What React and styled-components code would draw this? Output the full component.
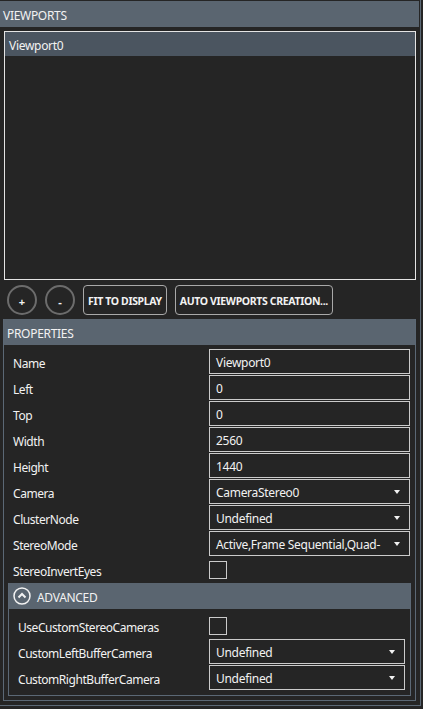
import React from 'react'
import styled, { createGlobalStyle } from 'styled-components'

const GlobalStyle = createGlobalStyle`
  body {
    margin: 0;
    background: #252525;
    font-family: 'Noto Sans', 'Open Sans', sans-serif;
    color: #f2f2f2;
  }
`

const Frame = styled.div`
  width: 421px;
  height: 706px;
  box-sizing: border-box;
  padding-top: 1px;
  border-right: 1px solid #5b6875;
  border-bottom: 1px solid #5b6875;
  display: flex;
  flex-direction: column;
`

const SectionHeader = styled.div`
  height: 26px;
  box-sizing: border-box;
  padding-top: 2px;
  flex: none;
  background: #5a6570;
  font-size: 12px;
  letter-spacing: -0.3px;
  padding-left: ${(props) => props.indent || 3}px;
  margin-right: ${(props) => props.gapRight || 0}px;
  display: flex;
  align-items: center;
  gap: 6px;
`

const ViewportList = styled.div`
  height: 249px;
  margin: 4px 4px 0 4px;
  box-sizing: border-box;
  border: 1px solid #e4e4e4;
  flex: none;
`

const ListItem = styled.div`
  height: 24px;
  box-sizing: border-box;
  padding: 2px 0 0 4px;
  display: flex;
  align-items: center;
  font-size: 12px;
  letter-spacing: -0.3px;
  background: ${(props) => (props.selected ? '#4b5560' : 'transparent')};
`

const ButtonRow = styled.div`
  height: 30px;
  margin-top: 5px;
  padding-left: 7px;
  display: flex;
  align-items: center;
  gap: 8px;
  flex: none;
`

const CircleButton = styled.div`
  width: 30px;
  height: 30px;
  box-sizing: border-box;
  border-radius: 50%;
  border: 2px solid #6c6c6c;
  display: flex;
  align-items: center;
  justify-content: center;
  font-size: 11px;
  font-weight: bold;
  padding-top: 3px;
`

const TextButton = styled.div`
  height: 30px;
  box-sizing: border-box;
  border: 1px solid #a9a9a9;
  border-radius: 4px;
  padding: 1px 4px 0 4px;
  display: flex;
  align-items: center;
  font-size: 10.5px;
  font-weight: bold;
  letter-spacing: -0.35px;
`

const PropertiesPanel = styled.div`
  margin: 4px 4px 4px 3px;
  flex: 1;
  border: 1px solid #5b6875;
  border-top: none;
  display: flex;
  flex-direction: column;
`

const PropList = styled.div`
  padding: 4px 5px 0 9px;
`

const PropRow = styled.div`
  display: grid;
  grid-template-columns: ${(props) => props.labelWidth}px 1fr;
  height: 26px;
  align-items: center;
`

const Label = styled.div`
  font-size: 12px;
  letter-spacing: -0.45px;
  padding-top: 2px;
`

const ValueBox = styled.div`
  height: 25px;
  align-self: start;
  box-sizing: border-box;
  border: 1px solid #cbcbcb;
  display: flex;
  align-items: center;
  justify-content: space-between;
  padding: 2px 9px 0 6px;
  font-size: 12px;
  letter-spacing: -0.3px;
  white-space: nowrap;
  overflow: hidden;
`

const Arrow = styled.span`
  width: 0;
  height: 0;
  margin-bottom: 2px;
  border-left: 3.5px solid transparent;
  border-right: 3.5px solid transparent;
  border-top: 4px solid #f2f2f2;
  flex: none;
`

const Checkbox = styled.div`
  width: 18px;
  height: 18px;
  box-sizing: border-box;
  border: 1px solid #cbcbcb;
`

const Advanced = styled.div`
  margin: 0 4px 4px 4px;
  flex: 1;
  border: 1px solid #5b6875;
  border-top: none;
`

const AdvancedRows = styled.div`
  padding: 4px 5px 4px 9px;
`

const ChevronSvg = styled.svg`
  margin-top: -2px;
  flex: none;
`

const ChevronIcon = () => (
  <ChevronSvg width="18" height="18" viewBox="0 0 18 18">
    <circle cx="9" cy="9" r="8" fill="none" stroke="#f2f2f2" strokeWidth="1.5" />
    <polyline points="5.5,10.5 9,7 12.5,10.5" fill="none" stroke="#f2f2f2" strokeWidth="2" />
  </ChevronSvg>
)

const props = [
  { name: 'Name', value: 'Viewport0' },
  { name: 'Left', value: '0' },
  { name: 'Top', value: '0' },
  { name: 'Width', value: '2560' },
  { name: 'Height', value: '1440' },
  { name: 'Camera', value: 'CameraStereo0', select: true },
  { name: 'ClusterNode', value: 'Undefined', select: true },
  { name: 'StereoMode', value: 'Active,Frame Sequential,Quad-', select: true },
  { name: 'StereoInvertEyes', check: true },
]

const advanced = [
  { name: 'UseCustomStereoCameras', check: true },
  { name: 'CustomLeftBufferCamera', value: 'Undefined', select: true },
  { name: 'CustomRightBufferCamera', value: 'Undefined', select: true },
]

const Field = ({ item }) => {
  if (item.check) return <Checkbox />
  return (
    <ValueBox>
      <span>{item.value}</span>
      {item.select && <Arrow />}
    </ValueBox>
  )
}

const App = () => (
  <Frame>
    <GlobalStyle />
    <SectionHeader gapRight={1}>VIEWPORTS</SectionHeader>
    <ViewportList>
      <ListItem selected>Viewport0</ListItem>
    </ViewportList>
    <ButtonRow>
      <CircleButton>+</CircleButton>
      <CircleButton>-</CircleButton>
      <TextButton>FIT TO DISPLAY</TextButton>
      <TextButton>AUTO VIEWPORTS CREATION...</TextButton>
    </ButtonRow>
    <PropertiesPanel>
      <SectionHeader>PROPERTIES</SectionHeader>
      <PropList>
        {props.map((item) => (
          <PropRow key={item.name} labelWidth={196}>
            <Label>{item.name}</Label>
            <Field item={item} />
          </PropRow>
        ))}
      </PropList>
      <Advanced>
        <SectionHeader indent={4}>
          <ChevronIcon />
          ADVANCED
        </SectionHeader>
        <AdvancedRows>
          {advanced.map((item) => (
            <PropRow key={item.name} labelWidth={191}>
              <Label>{item.name}</Label>
              <Field item={item} />
            </PropRow>
          ))}
        </AdvancedRows>
      </Advanced>
    </PropertiesPanel>
  </Frame>
)

export default App
